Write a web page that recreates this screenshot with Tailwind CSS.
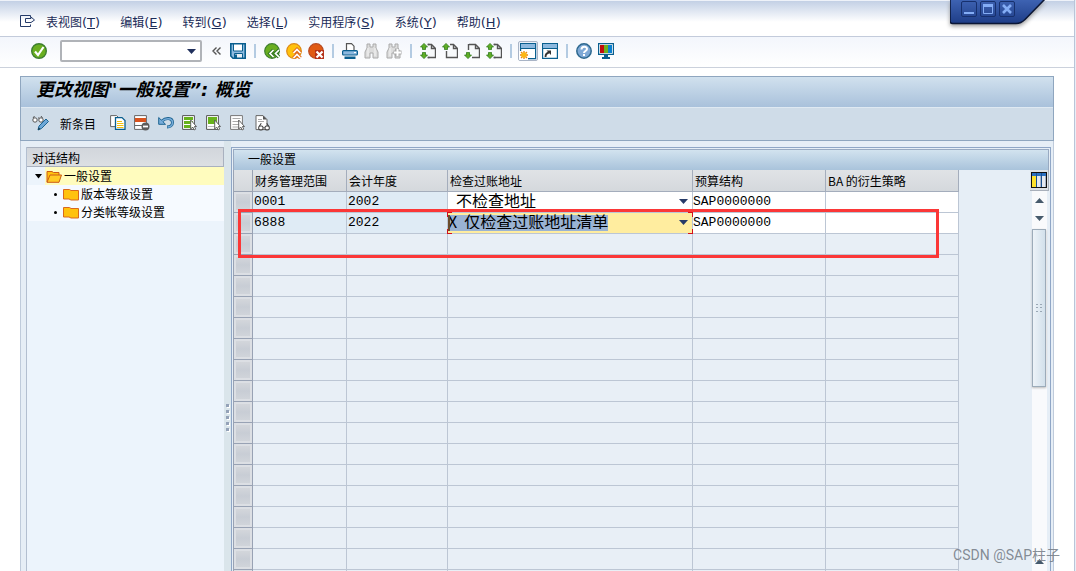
<!DOCTYPE html>
<html lang="zh-CN">
<head>
<meta charset="utf-8">
<meta name="viewport" content="width=device-width, initial-scale=1">
<title>更改视图"一般设置": 概览</title>
<script src="https://cdn.jsdelivr.net/npm/@tailwindcss/browser@4"></script>
</head>
<body class="relative flex h-screen flex-col overflow-hidden bg-white font-['Liberation_Sans','Noto_Sans_CJK_SC',sans-serif] text-xs text-black">

<!-- Shared icon shapes -->
<svg class="hidden">
  <symbol id="page" viewBox="0 0 16 16"><path d="M5 1.500h6.500l4 4v9H4.500V8M11.500 1.500v4h4" fill="#f7f9fb" stroke="#555" stroke-width="1.400"/></symbol>
  <symbol id="up" viewBox="0 0 8 7"><path d="M4 .4 7.500 4H5.500v2.600h-3V4H.5z" fill="#5fae24" stroke="#2f7a1c" stroke-width=".8"/></symbol>
  <symbol id="binoc" viewBox="0 0 16 16"><path d="M3 1h3v3h3V1h3v4l2 4v6H9v-5H6v5H1V9l2-4z" fill="#dcdcdc" stroke="#aaa"/><path d="M4 5v8M11 5v8" stroke="#f4f4f4"/></symbol>
  <symbol id="cursor" viewBox="0 0 7 12"><path d="M.7 1v9l2-2 1.500 3 1.500-.8L4.500 7.500h2z" fill="#fff" stroke="#555" stroke-width=".9"/></symbol>
  <symbol id="glasses" viewBox="0 0 11 8"><path d="M1 4 3 1M10 4 8 1M5 5h1" fill="none" stroke="#444"/><rect x=".6" y="3.600" width="4" height="3.500" rx="1.500" fill="#fff" stroke="#444"/><rect x="6.400" y="3.600" width="4" height="3.500" rx="1.500" fill="#fff" stroke="#444"/></symbol>
  <symbol id="folder" viewBox="0 0 16 13"><path d="M.5 1.500h6l1.500 1h7.500v9.500H8L6 11H.5z" fill="#ffc20e" stroke="#d9681d"/></symbol>
</svg>

<!-- Menu bar -->
<header class="flex h-[37px] shrink-0 items-center border-t border-b border-t-[#eef2f9] border-b-[#c3cbdb] bg-linear-to-b from-[#c3d0e5] to-white to-60% pl-5 pt-[7px] font-['Noto_Sans_CJK_SC',sans-serif]">
  <button class="mr-[11px] pb-0.5" aria-label="菜单">
    <svg class="h-3 w-[15px]" viewBox="0 0 15 12" fill="none" stroke="#243a68"><path d="M10.500 2.500V.5H.5v11h10V9.500M5.500 7.500v-4H11V2l3.500 3L11 7.500z"/></svg>
  </button>
  <nav class="flex gap-5 whitespace-nowrap text-[#1b2c58]">
    <a href="#">表视图<span class="font-['DejaVu_Sans',sans-serif] text-[13px] leading-4">(<u>T</u>)</span></a>
    <a href="#">编辑<span class="font-['DejaVu_Sans',sans-serif] text-[13px] leading-4">(<u>E</u>)</span></a>
    <a href="#">转到<span class="font-['DejaVu_Sans',sans-serif] text-[13px] leading-4">(<u>G</u>)</span></a>
    <a href="#">选择<span class="font-['DejaVu_Sans',sans-serif] text-[13px] leading-4">(<u>L</u>)</span></a>
    <a href="#">实用程序<span class="font-['DejaVu_Sans',sans-serif] text-[13px] leading-4">(<u>S</u>)</span></a>
    <a href="#">系统<span class="font-['DejaVu_Sans',sans-serif] text-[13px] leading-4">(<u>Y</u>)</span></a>
    <a href="#">帮助<span class="font-['DejaVu_Sans',sans-serif] text-[13px] leading-4">(<u>H</u>)</span></a>
  </nav>
</header>

<!-- Standard toolbar -->
<div class="flex h-[31px] shrink-0 items-center border-b border-[#cbd1dc] bg-linear-to-b from-[#f3f6fc] to-white pb-0.5 pl-7">
  <button class="flex w-[22px] justify-center" aria-label="回车">
    <svg class="size-4" viewBox="0 0 16 16"><circle cx="8" cy="8" r="7.300" fill="#6aae20" stroke="#3d7e2f" stroke-width="1.400"/><path d="m4 8.500 3 3.500L12.500 4" fill="none" stroke="#fff" stroke-width="2.200"/></svg>
  </button>
  <div class="ml-2.5 flex h-[22px] w-[142px] items-center rounded-[2px] border-2 border-[#b0b3b8] bg-white">
    <input class="h-full min-w-0 flex-1 px-1 outline-none" aria-label="命令">
    <button class="flex w-[18px] justify-center" aria-label="历史"><svg class="h-[5px] w-[9px]" viewBox="0 0 9 5"><path d="M0 0h9L4.500 5z" fill="#20305c"/></svg></button>
  </div>
  <button class="ml-[3px] flex w-[22px] justify-center" aria-label="收起">
    <svg class="h-2 w-[9px]" viewBox="0 0 9 8" fill="none" stroke="#555" stroke-width="1.400"><path d="M4.500.5 1 4l3.500 3.500M8.500.5 5 4l3.500 3.500"/></svg>
  </button>
  <button class="flex w-[22px] justify-center" aria-label="保存">
    <svg class="size-4" viewBox="0 0 16 16"><path d="M.8.800h14.400v14.400H3L.8 13z" fill="#8fbbe0" stroke="#0a5f8f" stroke-width="1.600"/><path d="M3.500 1h9v7h-9z" fill="#fff" stroke="#0a5f8f"/><path d="M4.500 10.500h8V15h-8z" fill="#e9eff5" stroke="#0a5f8f"/><path d="M5 11.500h2V15H5z" fill="#0a5f8f"/></svg>
  </button>
  <span class="mx-[5px] h-[14px] w-0.5 bg-[#b4cbe2]"></span>
  <button class="flex w-[22px] justify-center" aria-label="返回">
    <svg class="size-4" viewBox="0 0 16 16"><circle cx="8" cy="8" r="7.300" fill="#6aae20" stroke="#3d7e2f" stroke-width="1.200"/><path d="M9.500 7 6 10.500 9.500 14M15 7l-3.500 3.500L15 14" fill="none" stroke="#2e7422" stroke-width="3.600"/><path d="M9.500 7 6 10.500 9.500 14M15 7l-3.500 3.500L15 14" fill="none" stroke="#fff" stroke-width="1.700"/></svg>
  </button>
  <button class="flex w-[22px] justify-center" aria-label="退出">
    <svg class="size-4" viewBox="0 0 16 16"><circle cx="8" cy="8" r="7.300" fill="#ffc20e" stroke="#de8a16" stroke-width="1.200"/><path d="m7.500 10 3.500-3.500 3.500 3.500M7.500 15l3.500-3.500 3.500 3.500" fill="none" stroke="#e06a1a" stroke-width="3.600"/><path d="m7.500 10 3.500-3.500 3.500 3.500M7.500 15l3.500-3.500 3.500 3.500" fill="none" stroke="#fff" stroke-width="1.700"/></svg>
  </button>
  <button class="flex w-[22px] justify-center" aria-label="取消">
    <svg class="size-4" viewBox="0 0 16 16"><circle cx="8" cy="8" r="7.300" fill="#e05a14" stroke="#b84a22" stroke-width="1.200"/><path d="M7 7h9v9H7z" fill="#b43018"/><path d="m8.500 8.500 6 6m0-6-6 6" stroke="#fff" stroke-width="2.200"/></svg>
  </button>
  <span class="mx-[5px] h-[14px] w-0.5 bg-[#b4cbe2]"></span>
  <button class="flex w-[22px] justify-center" aria-label="打印">
    <svg class="size-4" viewBox="0 0 16 16"><path d="M4.500 8V.7h5l2.500 2.500V8" fill="#fff" stroke="#555" stroke-width="1.200"/><rect x=".6" y="7.600" width="14.800" height="4.400" rx="1" fill="#8db9df" stroke="#0a5f8f" stroke-width="1.200"/><path d="M2.500 13.500h11V16h-11z" fill="#0a5f8f"/><path d="M12 9h2v1h-2z" fill="#fff"/></svg>
  </button>
  <button class="flex w-[22px] justify-center" aria-label="查找"><svg class="size-4"><use href="#binoc"/></svg></button>
  <button class="flex w-[22px] justify-center" aria-label="查找下一个"><svg class="size-4" viewBox="0 0 16 16"><use href="#binoc" width="16" height="16"/><path d="M11 5.500v8M7.500 9.500h8" stroke="#aaa" stroke-width="4"/><path d="M11.500 6v7M8 9.500h7" stroke="#fff" stroke-width="2"/></svg></button>
  <span class="mx-[5px] h-[14px] w-0.5 bg-[#b4cbe2]"></span>
  <button class="flex w-[22px] justify-center" aria-label="第一页"><svg class="size-4" viewBox="0 0 16 16"><use href="#page" width="16" height="16"/><path d="M1 0h7v16H1z" fill="#f7f9fd"/><path d="M7.500 1.500h2M7.500 14.500h2" stroke="#555" stroke-width="1.400"/><use href="#up" width="8" height="7"/><use href="#up" width="8" height="7" transform="matrix(1 0 0 -1 0 16)"/></svg></button>
  <button class="flex w-[22px] justify-center" aria-label="上一页"><svg class="size-4" viewBox="0 0 16 16"><use href="#page" width="16" height="16"/><path d="M0 0h8v8H0z" fill="#f7f9fd"/><use href="#up" width="8" height="7"/></svg></button>
  <button class="flex w-[22px] justify-center" aria-label="下一页"><svg class="size-4" viewBox="0 0 16 16"><use href="#page" width="16" height="16"/><path d="M0 7h8v9H0z" fill="#f9fbfd"/><path d="M4.500 1v6" stroke="#555" stroke-width="1.400"/><use href="#up" width="8" height="7" transform="matrix(1 0 0 -1 0 16)"/></svg></button>
  <button class="flex w-[22px] justify-center" aria-label="最后一页"><svg class="size-4" viewBox="0 0 16 16"><use href="#page" width="16" height="16"/><path d="M1 0h7v16H1z" fill="#f7f9fd"/><path d="M7.500 1.500h2M7.500 14.500h2" stroke="#555" stroke-width="1.400"/><use href="#up" width="8" height="7"/><use href="#up" width="8" height="7" transform="matrix(1 0 0 -1 0 16)"/></svg></button>
  <span class="mx-[5px] h-[14px] w-0.5 bg-[#b4cbe2]"></span>
  <button class="flex h-5 w-[22px] items-center justify-center" aria-label="新建会话">
    <svg class="size-5 rounded-[2px] border border-[#a9b4c6] bg-[#edf1f8]" viewBox="0 0 18 18"><path d="M1.600 1.600h15v15h-15z" fill="#fff" stroke="#0a5f8f" stroke-width="1.200"/><path d="M2 2h14v4H2z" fill="#8db9df"/><path d="M2 6.500h14" stroke="#0a5f8f"/><path d="M0 9h9v9H0z" fill="#fff"/><path d="M5 9v8M1 13h8M2 10l6 6M8 10l-6 6" stroke="#e88712" stroke-width="1.300"/><circle cx="5" cy="13" r="2.700" fill="#fdb813"/></svg>
  </button>
  <button class="flex w-[22px] justify-center" aria-label="创建快捷方式">
    <svg class="size-4" viewBox="0 0 16 16"><path d="M.6.600h14.800v14.800H.6z" fill="#fff" stroke="#0a5f8f" stroke-width="1.200"/><path d="M1 1h14v4H1z" fill="#8db9df"/><path d="M1 5.500h14" stroke="#0a5f8f"/><path d="M3.500 14c0-3 1-4 3.500-4.500" fill="none" stroke="#333" stroke-width="1.800"/><path d="M4.500 7.500H9V12z" fill="#333"/></svg>
  </button>
  <span class="mx-[5px] h-[14px] w-0.5 bg-[#b4cbe2]"></span>
  <button class="flex w-[22px] justify-center" aria-label="帮助">
    <svg class="size-4" viewBox="0 0 16 16"><circle cx="8" cy="8" r="7.200" fill="#7fa9d6" stroke="#2d688f" stroke-width="1.500"/><path d="M5.500 6.500C5.500 2.800 11 3 11 6c0 2-3 2-3 4M8 11v2" fill="none" stroke="#fff" stroke-width="2"/></svg>
  </button>
  <button class="flex w-[22px] justify-center" aria-label="定制本地布局">
    <svg class="size-4" viewBox="0 0 16 16"><path d="M.6.600h14.800v10.800H.6z" fill="#fff" stroke="#0a5f8f" stroke-width="1.200"/><path d="M2 2h4v8H2z" fill="#c00d0d"/><path d="M6 2h4v8H6z" fill="#6fb01e"/><path d="M10 2h4v8h-4z" fill="#0a7fd0"/><path d="M6 12h4v2h2v2H4v-2h2z" fill="#0a5f8f"/></svg>
  </button>
</div>

<!-- Screen area -->
<main class="ml-5 mr-[22px] mt-2 flex min-h-0 flex-1 flex-col border-x border-[#bfcbdb] bg-[#e6eef6]">
  <div class="-mx-px border border-[#8fa6bf] bg-[#cfdce8]">
    <h1 class="flex h-[31px] items-center border-b border-[#dfe9f2] bg-linear-to-b from-[#d1e1ee] to-[#a9c1db] pb-[5px] pl-[15px] font-['DejaVu_Sans','Noto_Sans_CJK_SC',sans-serif] text-lg leading-6 font-bold italic">更改视图"一般设置”: 概览</h1>
    <div class="flex h-8 items-center pb-0.5 pl-[9px]">
      <button class="flex w-5 justify-center" aria-label="显示/更改">
        <svg class="size-[17px]" viewBox="0 0 17 17"><path d="m1 3 1.500-2M6 3h1.500M9 1l1.500 2" fill="none" stroke="#555"/><circle cx="3" cy="5" r="2.200" fill="#fff" stroke="#555"/><circle cx="9" cy="5" r="2.200" fill="#fff" stroke="#555"/><path d="m6 15 1-4 7-7 2.500 2.500-7 7z" fill="#6ea8d8" stroke="#1c6593"/><path d="m6 15 .6-2.500L8.500 14z" fill="#134"/></svg>
      </button>
      <button class="ml-2.5 mr-2 w-[38px] whitespace-nowrap pt-0.5 text-left font-['Noto_Sans_CJK_SC',sans-serif]">新条目</button>
      <button class="flex w-6 justify-center" aria-label="复制为">
        <svg class="size-4" viewBox="0 0 16 16"><path d="M.6.600h6l3 3v8h-9z" fill="#fff" stroke="#666"/><path d="M5.500 2.600h6.500l3 3v8.800H5.500z" fill="#fff" stroke="#0a5f8f" stroke-width="1.300"/><path d="M7 6.500h5M7 8.500h6.500M7 10.500h6.500M7 12.500h6.500" stroke="#f4c10c"/></svg>
      </button>
      <button class="flex w-6 justify-center" aria-label="删除">
        <svg class="size-4" viewBox="0 0 16 16"><path d="M.6.600h11.800v13.800H.6z" fill="#fff" stroke="#666"/><path d="M1 3h11v4H1z" fill="#d9531e"/><path d="M1 10.500h8" stroke="#666"/><circle cx="11.500" cy="11.500" r="4" fill="#5b5b5b"/><path d="M9 11.500h5" stroke="#fff" stroke-width="1.800"/></svg>
      </button>
      <button class="flex w-6 justify-center" aria-label="撤销">
        <svg class="size-4" viewBox="0 0 16 16"><path d="M4 6c3.500-3.500 10.500-3.500 10.500 1.500 0 3-2.500 4.500-5.500 4.500" fill="none" stroke="#1f6592" stroke-width="3"/><path d="M.7 2.500v6.800h6.800z" fill="#78addb" stroke="#1f6592"/><path d="M3.500 6.500C7 3 14.500 2.500 14.500 7.500c0 3-2.500 4.500-5 4.500" fill="none" stroke="#78addb" stroke-width="1.400"/></svg>
      </button>
      <button class="flex w-6 justify-center" aria-label="全选">
        <svg class="size-4" viewBox="0 0 16 16"><path d="M.6.600h11.800v13.800H.6z" fill="#fff" stroke="#555"/><path d="M2 2h9v3H2zm0 4h9v3H2zm0 4h9v3H2z" fill="#67b21c"/><use href="#cursor" x="8" y="4" width="7" height="12"/></svg>
      </button>
      <button class="flex w-6 justify-center" aria-label="选择块">
        <svg class="size-4" viewBox="0 0 16 16"><path d="M.6.600h11.800v13.800H.6z" fill="#fff" stroke="#555"/><path d="M2 2h9v7H2z" fill="#67b21c"/><path d="M2 11.500h7" stroke="#bbb"/><use href="#cursor" x="8" y="4" width="7" height="12"/></svg>
      </button>
      <button class="flex w-6 justify-center" aria-label="取消全选">
        <svg class="size-4" viewBox="0 0 16 16"><path d="M.6.600h11.800v13.800H.6z" fill="#fff" stroke="#777"/><path d="M2.500 3.500h8M2.500 6.500h8M2.500 9.500h8M2.500 12h8" stroke="#aaa"/><use href="#cursor" x="8" y="4" width="7" height="12"/></svg>
      </button>
      <button class="flex w-6 justify-center" aria-label="详细信息">
        <svg class="size-4" viewBox="0 0 16 16"><path d="M2 .6h7l4 4v10H2z" fill="#fff" stroke="#666"/><path d="M9 .6v4h4z" fill="#555"/><path d="M4 4.500h4M4 6.500h6" stroke="#aaa"/><use href="#glasses" x="4" y="7" width="12" height="9"/></svg>
      </button>
    </div>
  </div>

  <div class="flex min-h-0 flex-1 pl-[5px]">
    <!-- Dialog structure tree -->
    <aside class="mt-1.5 flex w-[198px] shrink-0 flex-col border-l border-[#b3bfd0] bg-[#ecf4fc] font-['Noto_Sans_CJK_SC',sans-serif]">
      <h2 class="h-5 border border-l-0 border-[#a9b1bf] bg-linear-to-b from-[#d2d6dc] to-[#dcdfe3] pl-[5px] leading-[19px]">对话结构</h2>
      <ul class="leading-[18px]">
        <li>
          <a href="#" class="flex h-[18px] items-center">
            <span class="flex w-[18px] justify-end pr-[3px]"><svg class="h-[5px] w-[7px]" viewBox="0 0 7 5"><path d="M0 0h7L3.500 4.500z"/></svg></span>
            <span class="flex flex-1 items-center gap-[2px] bg-[#fffcbe] pl-px">
              <svg class="h-[13px] w-4" viewBox="0 0 16 13"><path d="M1 12V1.500h5l1.500 1H13V5" fill="#ffc20e" stroke="#cc5a18"/><path d="M1 12.300 4 5h11.500L13 12.300z" fill="#ffcb25" stroke="#cc5a18"/></svg>
              <span>一般设置</span>
            </span>
          </a>
          <ul class="bg-[#f6faff]">
            <li><a href="#" class="flex h-[18px] items-center"><span class="ml-[27px] mr-1.5 size-[3px] rounded-full bg-black"></span><svg class="mr-[2px] h-[13px] w-4"><use href="#folder"/></svg>版本等级设置</a></li>
            <li><a href="#" class="flex h-[18px] items-center"><span class="ml-[27px] mr-1.5 size-[3px] rounded-full bg-black"></span><svg class="mr-[2px] h-[13px] w-4"><use href="#folder"/></svg>分类帐等级设置</a></li>
          </ul>
        </li>
      </ul>
    </aside>

    <!-- Splitter -->
    <div class="flex w-[7px] shrink-0 flex-col items-center justify-center gap-[3px] bg-[#dae5eb] pt-[122px]" role="separator">
      <i class="size-[3px] bg-[#94a2b8] shadow-[1px_1px_0_white]"></i>
      <i class="size-[3px] bg-[#94a2b8] shadow-[1px_1px_0_white]"></i>
      <i class="size-[3px] bg-[#94a2b8] shadow-[1px_1px_0_white]"></i>
      <i class="size-[3px] bg-[#94a2b8] shadow-[1px_1px_0_white]"></i>
      <i class="size-[3px] bg-[#94a2b8] shadow-[1px_1px_0_white]"></i>
    </div>

    <!-- Settings table -->
    <section class="relative mr-[2px] mt-1.5 flex min-w-0 flex-1 flex-col border border-b-0 border-[#8fa6c6] p-px pb-0 font-['Noto_Sans_CJK_SC',sans-serif]">
      <h2 class="h-[21px] shrink-0 border border-b-0 border-[#98aac2] bg-linear-to-b from-[#d2e3ef] to-[#a9c3db] pl-[14px] leading-[18px]">一般设置</h2>
      <div class="flex min-h-0 flex-1 justify-between overflow-hidden">
        <table class="w-[726px] shrink-0 table-fixed border-separate border-spacing-0 self-start">
          <colgroup><col class="w-5"><col class="w-[94px]"><col class="w-[101px]"><col class="w-[245px]"><col class="w-[133px]"><col class="w-[133px]"></colgroup>
          <thead>
            <tr class="h-[22px] whitespace-nowrap bg-linear-to-b from-[#e0e3e6] to-[#d4d8dc] text-left leading-5">
              <th class="border-b border-r border-l border-[#9aa3b3] p-0"><button class="block h-5 w-full" aria-label="全选行"></button></th>
              <th class="border-b border-r border-[#a4adbc] p-0 pl-0.5 font-normal">财务管理范围</th>
              <th class="border-b border-r border-[#a4adbc] p-0 pl-0.5 font-normal">会计年度</th>
              <th class="border-b border-r border-[#a4adbc] p-0 pl-0.5 font-normal">检查过账地址</th>
              <th class="border-b border-r border-[#a4adbc] p-0 pl-0.5 font-normal">预算结构</th>
              <th class="border-b border-r border-[#a4adbc] p-0 pl-0.5 font-normal">BA 的衍生策略</th>
            </tr>
          </thead>
          <tbody id="rows" class="leading-5">
            <tr class="h-[21px]">
              <td class="border-x border-b border-[#98a2b4] p-0"><button class="block h-5 w-full border-2 border-[#dcdfe4] bg-linear-to-b from-[#d3d6db] via-[#c8cdd5] to-[#d0d4da]" aria-label="选择行"></button></td>
              <td class="border-r border-b border-[#bcc6d4] bg-[#dfebf5] p-0 pl-px font-['Liberation_Mono',monospace] text-[13px] leading-5">0001</td>
              <td class="border-r border-b border-[#bcc6d4] bg-[#dfebf5] p-0 pl-px font-['Liberation_Mono',monospace] text-[13px] leading-5">2002</td>
              <td class="border-r border-b border-[#bcc6d4] bg-white p-0">
                <div class="relative h-5">
                  <select class="block h-5 w-full appearance-none pb-1 pl-2 text-base leading-4 outline-none" aria-label="检查过账地址"><option>不检查地址</option></select>
                  <svg class="pointer-events-none absolute top-[7px] right-1 h-[5px] w-[9px]" viewBox="0 0 9 5"><path d="M0 0h9L4.500 5z" fill="#263a68"/></svg>
                </div>
              </td>
              <td class="border-r border-b border-[#bcc6d4] bg-white p-0"><input class="block h-5 w-full font-['Liberation_Mono',monospace] text-[13px] outline-none" value="SAP0000000" aria-label="预算结构"></td>
              <td class="border-r border-b border-[#bcc6d4] bg-white p-0"><input class="block h-5 w-full outline-none" aria-label="BA 的衍生策略"></td>
            </tr>
            <tr class="h-[21px]">
              <td class="border-x border-b border-[#98a2b4] p-0"><button class="block h-5 w-full border-2 border-[#dcdfe4] bg-linear-to-b from-[#d3d6db] via-[#c8cdd5] to-[#d0d4da]" aria-label="选择行"></button></td>
              <td class="border-r border-b border-[#bcc6d4] bg-[#dfebf5] p-0 pl-px font-['Liberation_Mono',monospace] text-[13px] leading-5">6888</td>
              <td class="border-r border-b border-[#bcc6d4] bg-[#dfebf5] p-0 pl-px font-['Liberation_Mono',monospace] text-[13px] leading-5">2022</td>
              <td class="border-r border-b border-[#bcc6d4] bg-[#ffed9f] p-0">
                <div class="relative h-5">
                  <select class="block h-5 w-full appearance-none bg-[linear-gradient(#9ab3d3,#9ab3d3)] bg-[length:160px_16px] bg-[position:0_2px] bg-no-repeat pb-1 text-base leading-4 outline-none" aria-label="检查过账地址"><option>X&nbsp;&nbsp;仅检查过账地址清单</option></select>
                  <svg class="pointer-events-none absolute top-[7px] right-1 h-[5px] w-[9px]" viewBox="0 0 9 5"><path d="M0 0h9L4.500 5z" fill="#263a68"/></svg>
                  <i class="absolute top-[2px] left-0 h-4 w-0.5 bg-[#6b4d2c]"></i>
                  <i class="absolute -top-px -left-px h-[5px] w-[5px] border-t border-l border-[#d40f1c]"></i>
                  <i class="absolute -top-px -right-px h-[5px] w-[5px] border-t border-r border-[#d40f1c]"></i>
                  <i class="absolute -bottom-px -left-px h-[5px] w-[5px] border-b border-l border-[#d40f1c]"></i>
                  <i class="absolute -right-px -bottom-px h-[5px] w-[5px] border-r border-b border-[#d40f1c]"></i>
                </div>
              </td>
              <td class="border-r border-b border-[#bcc6d4] bg-white p-0"><input class="block h-5 w-full font-['Liberation_Mono',monospace] text-[13px] outline-none" value="SAP0000000" aria-label="预算结构"></td>
              <td class="border-r border-b border-[#bcc6d4] bg-white p-0"><input class="block h-5 w-full outline-none" aria-label="BA 的衍生策略"></td>
            </tr>
          </tbody>
        </table>
        <template id="empty-row">
          <tr class="h-[21px] bg-[#e8eff6]">
            <td class="border-x border-b border-[#98a2b4] p-0"><button class="block h-5 w-full border-2 border-[#dcdfe4] bg-linear-to-b from-[#d3d6db] via-[#c8cdd5] to-[#d0d4da]" aria-label="选择行"></button></td>
            <td class="border-r border-b border-[#bcc6d4] p-0"></td>
            <td class="border-r border-b border-[#bcc6d4] p-0"></td>
            <td class="border-r border-b border-[#bcc6d4] p-0"></td>
            <td class="border-r border-b border-[#bcc6d4] p-0"></td>
            <td class="border-r border-b border-[#bcc6d4] p-0"></td>
          </tr>
        </template>

        <!-- Column configuration and vertical scrollbar -->
        <div class="flex w-5 flex-col items-center">
          <button class="flex h-[21px] w-[19px] shrink-0 items-center justify-center border-r border-b border-[#a9b0bb] bg-[#dee1e5]" aria-label="配置">
            <svg class="h-4 w-4" viewBox="0 0 16 16" shape-rendering="crispEdges"><path d="M0 0h16v16H0z" fill="#111"/><path d="M1 1h14v3H1z" fill="#2c6fbf"/><path d="M1 4h4v11H1z" fill="#ffe12b"/><path d="M6 4h4v11H6zM11 4h4v11h-4z" fill="#e6e9ef"/><path d="M9 4h1v11H9zM14 4h1v11h-1z" fill="#aab4c6"/><path d="M5 1h1v14H5zM10 1h1v14h-1z" fill="#1a4f8f"/></svg>
          </button>
          <div class="flex w-[15px] flex-1 flex-col items-center bg-[#f9fafc]">
            <button class="flex h-[18px] w-full shrink-0 items-center justify-center" aria-label="向上"><svg class="h-[5px] w-[9px]" viewBox="0 0 9 5"><path d="M0 5h9L4.500 0z" fill="#465a6c"/></svg></button>
            <button class="flex h-[18px] w-full shrink-0 items-center justify-center" aria-label="向下"><svg class="h-[5px] w-[9px]" viewBox="0 0 9 5"><path d="M0 0h9L4.500 5z" fill="#465a6c"/></svg></button>
            <div class="mt-0.5 flex h-[158px] w-[14px] shrink-0 items-center justify-center border border-[#9cabb9] bg-linear-to-r from-[#edf3f8] to-[#d2e0eb] shadow-[0_1px_2px_#bbb]">
              <svg class="h-[9px] w-[6px]" viewBox="0 0 6 9" fill="#9aa8b5" shape-rendering="crispEdges"><path d="M0 0h2v1H0zm4 0h2v1H4zM0 3h2v1H0zm4 0h2v1H4zM0 7h2v1H0zm4 0h2v1H4z"/></svg>
            </div>
            <button class="mt-auto mb-1 flex h-3 w-full items-center justify-center" aria-label="向上滚动"><svg class="h-[5px] w-[9px]" viewBox="0 0 9 5"><path d="M0 5h9L4.500 0z" fill="#465a6c"/></svg></button>
          </div>
        </div>
      </div>
      <!-- Annotation frame around the new entry -->
      <div class="pointer-events-none absolute top-[61px] left-1.5 h-[49px] w-[701px] border-3 border-[#fb3737]"></div>
    </section>
  </div>
</main>

<!-- Window frame edge -->
<div class="pointer-events-none absolute inset-y-0 right-0 w-[2px] border-l border-[#b9c5d8] bg-[#e9eef6]"></div>

<!-- Window controls -->
<div class="absolute top-0 right-[30px] h-[26px] w-24 drop-shadow-[0_2px_2px_#999]">
  <svg class="absolute inset-0 h-[26px] w-24" viewBox="0 0 96 26">
    <defs><linearGradient id="tab" x2="0" y2="1"><stop stop-color="#3f64b4"/><stop offset="1" stop-color="#1e3d87"/></linearGradient></defs>
    <path d="M0-1V21q0 2.500 2.500 2.500H66q5 0 9-4L95-1z" fill="url(#tab)" stroke="#0a1635" stroke-width="1.500"/>
  </svg>
  <div class="relative flex gap-[3px] pt-px pl-[11px]">
    <button class="grid size-4 place-items-center rounded-[2px] border border-[#17306d]" aria-label="最小化"><svg class="size-3" viewBox="0 0 12 12"><path d="M1 9h10v2H1z" fill="#84adf5"/></svg></button>
    <button class="grid size-4 place-items-center rounded-[2px] border border-[#17306d]" aria-label="最大化"><svg class="size-3" viewBox="0 0 12 12"><path d="M1.500 2.500h9v8h-9z" fill="none" stroke="#84adf5"/><path d="M1 1h10v3H1z" fill="#84adf5"/></svg></button>
    <button class="grid size-4 place-items-center rounded-[2px] border border-[#17306d]" aria-label="关闭"><svg class="size-3" viewBox="0 0 12 12"><path d="m2 2 8 8m0-8-8 8" stroke="#84adf5" stroke-width="2.600"/></svg></button>
  </div>
</div>

<!-- Watermark -->
<p class="pointer-events-none absolute right-4 bottom-1.5 font-['Roboto','Noto_Sans_CJK_SC',sans-serif] text-sm leading-5 text-[#777e88]/90">CSDN @SAP柱子</p>

<script>
  const rows = document.getElementById('rows');
  const emptyRow = document.getElementById('empty-row');
  for (let i = 0; i < 17; i++) rows.append(emptyRow.content.cloneNode(true));
</script>
</body>
</html>
